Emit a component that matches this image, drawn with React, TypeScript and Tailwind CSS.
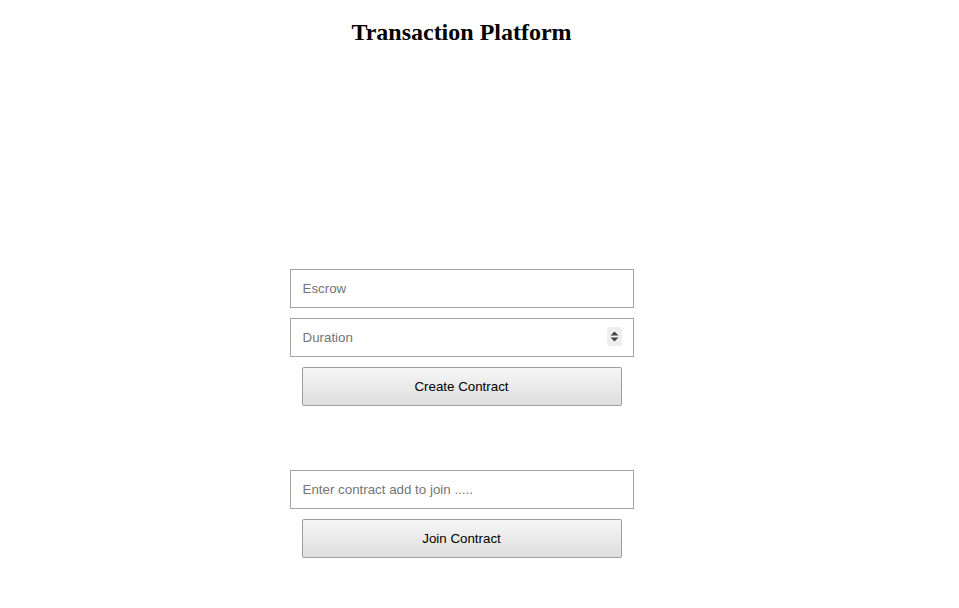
export default function App() {
  return (
    <div className="min-h-screen bg-white pr-[36px] flex flex-col items-center font-['Liberation_Sans',Arial,sans-serif]">
      <h1 className="mt-[18px] text-[24px] leading-[28px] font-bold text-black font-['Liberation_Serif','Times_New_Roman',serif]">
        Transaction Platform
      </h1>

      <div className="mt-[223px] w-[344px] flex flex-col gap-[10px]">
        <input
          type="text"
          placeholder="Escrow"
          className="h-[39px] w-full border border-[#a3a3a3] bg-white px-[12px] text-[13.33px] text-black placeholder:text-[#757575] outline-none"
        />
        <div className="relative">
          <input
            type="text"
            placeholder="Duration"
            className="h-[39px] w-full border border-[#a3a3a3] bg-white px-[12px] text-[13.33px] text-black placeholder:text-[#757575] outline-none"
          />
          <div className="absolute right-[12px] top-[9px] w-[15px] h-[19px] bg-[#efefef] rounded-[2px] flex items-center justify-center">
            <svg width="9" height="11" viewBox="0 0 9 11">
              <path d="M4.5 0.5 L8.5 4.5 H0.5 Z" fill="#444" />
              <path d="M4.5 10.5 L8.5 6.5 H0.5 Z" fill="#444" />
            </svg>
          </div>
        </div>
        <button className="mx-auto w-[320px] h-[39px] border border-[#9e9e9e] rounded-[2px] bg-gradient-to-b from-[#f6f6f6] to-[#dedede] text-[13.33px] text-black">
          Create Contract
        </button>
      </div>

      <div className="mt-[64px] w-[344px] flex flex-col gap-[10px]">
        <input
          type="text"
          placeholder="Enter contract add to join ....."
          className="h-[39px] w-full border border-[#a3a3a3] bg-white px-[12px] text-[13.33px] text-black placeholder:text-[#757575] outline-none"
        />
        <button className="mx-auto w-[320px] h-[39px] border border-[#9e9e9e] rounded-[2px] bg-gradient-to-b from-[#f6f6f6] to-[#dedede] text-[13.33px] text-black">
          Join Contract
        </button>
      </div>
    </div>
  );
}
